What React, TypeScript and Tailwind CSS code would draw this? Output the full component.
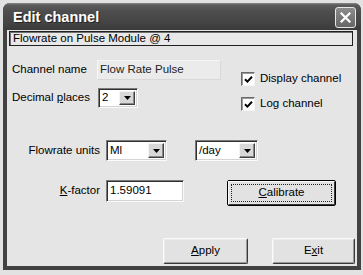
import React from "react";

const font = { fontFamily: '"Liberation Sans", Arial, sans-serif' };

function Arrow() {
  return (
    <div className="w-[16px] h-full bg-[#d8d8d8] border border-t-[#f4f4f4] border-l-[#f4f4f4] border-b-[#404040] border-r-[#404040] shadow-[inset_-1px_-1px_0_#8a8a8a] flex items-center justify-center">
      <svg width="7" height="4" viewBox="0 0 7 4">
        <path d="M0 0h7L3.5 4z" fill="#000" />
      </svg>
    </div>
  );
}

function Select({ value, w, h }: { value: string; w: string; h: string }) {
  return (
    <div
      className={`${w} ${h} bg-white border border-t-[#7a7a7a] border-l-[#7a7a7a] border-b-[#fafafa] border-r-[#fafafa] shadow-[inset_1px_1px_0_#303030,inset_-1px_-1px_0_#d4d4d4] flex items-stretch p-[2px]`}
    >
      <div className="flex-1 flex items-center pl-[1px] text-[11.5px] leading-none text-black">{value}</div>
      <Arrow />
    </div>
  );
}

function Check({ label }: { label: string }) {
  return (
    <div className="flex items-center">
      <div className="w-[14px] h-[14px] bg-white border border-t-[#6a6a6a] border-l-[#6a6a6a] border-b-[#f4f4f4] border-r-[#f4f4f4] shadow-[inset_1px_1px_0_#9a9a9a] flex items-center justify-center">
        <svg width="9" height="9" viewBox="0 0 9 9">
          <path d="M1 4.2 L3.4 6.6 L8 1.8" stroke="#000" strokeWidth="2" fill="none" />
        </svg>
      </div>
      <span className="ml-[5px] text-[11.5px] leading-none text-black">{label}</span>
    </div>
  );
}

function Btn({ children, w }: { children: React.ReactNode; w: string }) {
  return (
    <div
      className={`${w} h-[26px] bg-[#e2e2e2] border border-t-[#fafafa] border-l-[#fafafa] border-b-[#3a3a3a] border-r-[#3a3a3a] shadow-[inset_-1px_-1px_0_#9a9a9a,inset_1px_1px_0_#ececec] rounded-[2px] flex items-center justify-center text-[11.5px] text-black leading-none`}
    >
      {children}
    </div>
  );
}

export default function App() {
  return (
    <div className="w-[363px] h-[275px] bg-[#e2e2e2] overflow-hidden" style={font}>
      <div className="ml-[3px] mt-[3px] w-[358px] h-[267px] flex flex-col rounded-t-[7px] overflow-hidden bg-[#424242]">
        {/* Title bar */}
        <div className="h-[27px] shrink-0 flex items-center justify-between bg-[linear-gradient(to_bottom,#8a8a8a_0px,#5c5c5c_2px,#4e4e4e_8px,#444444_20px,#3a3a3a_27px)] pl-[10px] pr-[5px]">
          <span className="text-white font-bold text-[14.5px] leading-none mt-[2px] [text-shadow:1px_1px_0_#222]">
            Edit channel
          </span>
          <div className="w-[21px] h-[21px] rounded-[3px] border border-[#e8e8e8] bg-[linear-gradient(to_bottom,#8c8c8c,#666666)] flex items-center justify-center mt-[2px]">
            <svg width="11" height="11" viewBox="0 0 11 11">
              <path d="M1.5 1.5 L9.5 9.5 M9.5 1.5 L1.5 9.5" stroke="#fff" strokeWidth="2.2" strokeLinecap="square" />
            </svg>
          </div>
        </div>
        {/* Client */}
        <div className="flex-1 mx-[4px] mb-[4px] bg-[#e5e5e5] flex flex-col">
          <div className="mt-[1px] ml-[2px] mr-[4px] h-[15px] border border-[#202020] shadow-[inset_1px_1px_0_#707070] bg-[#e8e8e8] flex items-center pl-[3px] text-[11.5px] leading-none text-black">
            Flowrate on Pulse Module @ 4
          </div>

          <div className="flex">
            <div className="flex flex-col">
              <div className="mt-[14px] flex items-center h-[20px]">
                <span className="ml-[5px] w-[85px] text-[11.5px] leading-none text-black">Channel name</span>
                <div className="w-[124px] h-[20px] bg-[#ebebeb] border border-[#f6f6f6] border-r-[#d8d8d8] border-b-[#d8d8d8] flex items-center pl-[2px] text-[11.5px] leading-none text-[#222]">
                  Flow Rate Pulse
                </div>
              </div>
              <div className="mt-[8px] flex items-center h-[20px]">
                <span className="ml-[5px] w-[86px] text-[11.5px] leading-none text-black">
                  Decimal <span className="underline">p</span>laces
                </span>
                <Select value="2" w="w-[40px]" h="h-[20px]" />
              </div>
            </div>
            <div className="flex flex-col ml-[20px]">
              <div className="mt-[26px]">
                <Check label="Display channel" />
              </div>
              <div className="mt-[11px]">
                <Check label="Log channel" />
              </div>
            </div>
          </div>

          <div className="mt-[29px] flex items-center">
            <span className="w-[93px] text-right text-[11.5px] leading-none text-black">Flowrate units</span>
            <div className="ml-[6px]">
              <Select value="Ml" w="w-[61px]" h="h-[21px]" />
            </div>
            <div className="ml-[28px]">
              <Select value="/day" w="w-[63px]" h="h-[21px]" />
            </div>
          </div>

          <div className="mt-[19px] flex items-start">
            <span className="w-[93px] h-[22px] flex items-center justify-end text-[11.5px] leading-none text-black">
              <span className="underline">K</span>-factor
            </span>
            <div className="ml-[6px] w-[78px] h-[22px] bg-white border border-t-[#7a7a7a] border-l-[#7a7a7a] border-b-[#fafafa] border-r-[#fafafa] shadow-[inset_1px_1px_0_#303030,inset_-1px_-1px_0_#d4d4d4] flex items-center pl-[3px] text-[11.5px] leading-none text-black">
              1.59091
            </div>
            <div className="ml-[43px] w-[109px] h-[26px] border border-black rounded-[2px]">
              <div className="w-full h-full bg-[#e2e2e2] border border-t-[#fafafa] border-l-[#fafafa] border-b-[#3a3a3a] border-r-[#3a3a3a] p-[2px]">
                <div className="w-full h-full border border-dotted border-[#222] flex items-center justify-center text-[11.5px] leading-none text-black">
                  <span className="underline">C</span>alibrate
                </div>
              </div>
            </div>
          </div>

          <div className="mt-auto mb-[2px] flex justify-end pr-[2px] gap-[24px]">
            <Btn w="w-[85px]">
              <span className="underline">A</span>pply
            </Btn>
            <Btn w="w-[83px]">
              E<span className="underline">x</span>it
            </Btn>
          </div>
        </div>
      </div>
    </div>
  );
}
